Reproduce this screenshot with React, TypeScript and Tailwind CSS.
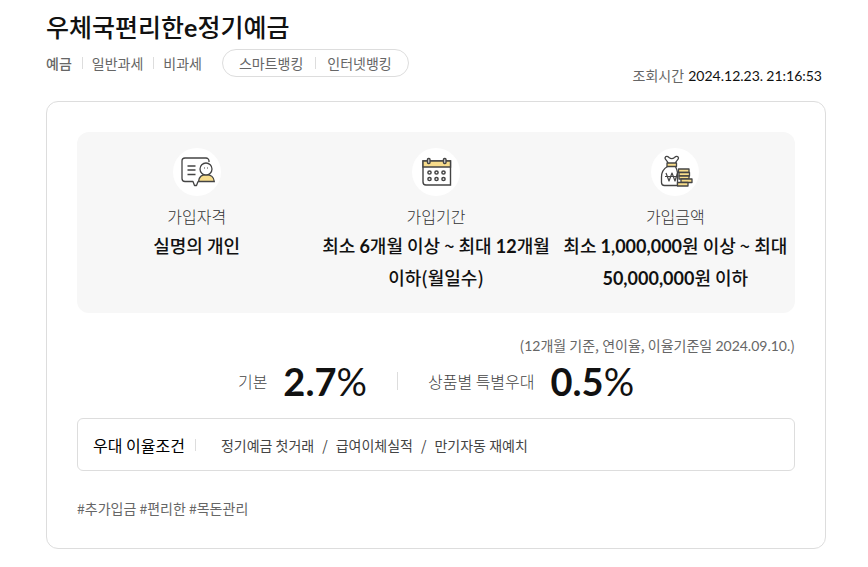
import type { ReactNode } from "react";

type SummaryItemType = {
  label: string;
  value: string;
  icon: ReactNode;
};

const PersonIcon = () => (
  <svg width="36" height="32" viewBox="0 0 36 32" fill="none" stroke="#444" strokeWidth="1.3" aria-hidden="true">
    <path d="M30 6V5A3 3 0 0 0 27 2H6A3 3 0 0 0 3 5V22.500A3 3 0 0 0 6 25.500H14L15.500 29.500H17.500L19 25.500" strokeLinejoin="round" />
    <path d="M8.500 10H16.500M8.500 14H16.500M8.500 18.500H16.500" />
    <path d="M19.500 25.500C20 21.500 22 18.500 27 18.500S35 21.500 35.300 25.500Z" fill="#f7dc8b" />
    <circle cx="27" cy="13" r="6" fill="#fff" />
    <path d="M25.500 11.500V12.500M28.500 11.500V12.500" strokeWidth="1" />
  </svg>
);

const CalendarIcon = () => (
  <svg width="32" height="32" viewBox="0 0 32 32" fill="none" stroke="#444" strokeWidth="1.4" aria-hidden="true">
    <path d="M3 5H30.500V29H6A3 3 0 0 1 3 26Z" fill="#fff" />
    <path d="M3 5H30.500V11H3Z" fill="#f7dc8b" />
    <rect x="7.500" y="2.500" width="2.500" height="5" rx="1" fill="#ddd" />
    <rect x="23.500" y="2.500" width="2.500" height="5" rx="1" fill="#ddd" />
    <g strokeWidth="1.5">
      <circle cx="9.500" cy="16.500" r="1.600" />
      <circle cx="16.500" cy="16.500" r="1.600" />
      <circle cx="23.500" cy="16.500" r="1.600" />
      <circle cx="9.500" cy="23" r="1.600" />
      <circle cx="16.500" cy="23" r="1.600" />
      <circle cx="23.500" cy="23" r="1.600" />
    </g>
  </svg>
);

const MoneyIcon = () => (
  <svg width="36" height="34" viewBox="0 0 36 34" fill="none" stroke="#444" strokeWidth="1.3" strokeLinejoin="round" aria-hidden="true">
    <path d="M11 8.500C11 6 8 5 8 3C8.500 1 10.500 1 12 2.500C13.500 3.700 16 3.700 17.500 2.500C19 1 21 1 21.500 3C21.500 5 18.500 6 18.500 8.500" />
    <path d="M10.500 11.500C7 13.500 4.500 17.500 4.500 22V27.500A3 3 0 0 0 7.500 30.500H20.500V17.500C20 15 19.500 13.500 18.500 11.500" />
    <path d="M10 8H19.500V11.500H10Z" fill="#f7dc8b" />
    <path d="M9 18L12 26L15 18L18 26L20.500 18M8 21.500H21" strokeWidth="1.200" />
    <g fill="#f7dc8b">
      <path d="M21.500 14H32V17.500H21.500Z" />
      <path d="M22 17.500H32.500V21H22Z" />
      <path d="M22 21H32V24H22Z" />
      <path d="M24 24H35V27.500H24Z" />
      <path d="M20.500 27.500H31V31H20.500Z" />
    </g>
  </svg>
);

const summary: SummaryItemType[] = [
  { label: "가입자격", value: "실명의 개인", icon: <PersonIcon /> },
  {
    label: "가입기간",
    value: "최소 6개월 이상 ~ 최대 12개월 이하(월일수)",
    icon: <CalendarIcon />,
  },
  {
    label: "가입금액",
    value: "최소 1,000,000원 이상 ~ 최대 50,000,000원 이하",
    icon: <MoneyIcon />,
  },
];

const conditions = ["정기예금 첫거래", "급여이체실적", "만기자동 재예치"];

const Divider = ({ className }: { className: string }) => (
  <span className={`w-px bg-[#ddd] ${className}`} />
);

// numbers use Lato, everything else the Korean font
const Numbers = ({ text, className = "" }: { text: string; className?: string }) => (
  <>
    {text.split(/(\d[\d,.:]*|\s)/).map((part, i) =>
      /^\d/.test(part) ? (
        <span key={i} className={`font-[Lato,sans-serif] leading-none ${className}`}>
          {part}
        </span>
      ) : (
        part
      )
    )}
  </>
);

export default function App() {
  return (
    <main className="bg-white pl-[46px] pr-[42px] pt-[6px] pb-[18px] font-['Noto_Sans_CJK_KR',sans-serif] text-sm text-[#666] break-keep">
      {/* Header */}
      <header className="flex items-end justify-between">
        <div className="pb-3">
          <h1 className="text-[25px] leading-10 font-medium text-[#111]">
            우체국편리한
            <span className="font-[Lato,sans-serif] leading-none font-bold">e</span>
            정기예금
          </h1>
          <div className="mt-[3px] flex items-center">
            <span className="font-medium">예금</span>
            <Divider className="h-3 ml-[10px] mr-[9px]" />
            <span>일반과세</span>
            <Divider className="h-3 ml-[10px] mr-[9px]" />
            <span>비과세</span>
            <div className="ml-5 flex h-7 items-center rounded-full border border-[#ddd] px-4">
              <span>스마트뱅킹</span>
              <Divider className="h-3 ml-3 mr-[11px]" />
              <span>인터넷뱅킹</span>
            </div>
          </div>
        </div>
        <p className="pr-1 pb-[2px] leading-6">
          조회시간{" "}
          <span className="ml-px text-[#111]">
            <Numbers text="2024.12.23. 21:16:53" />
          </span>
        </p>
      </header>

      <section className="mt-3 rounded-xl border border-[#ddd] px-[30px] pt-[30px] pb-7">
        {/* Summary */}
        <ul className="grid grid-cols-3 rounded-xl bg-[#f7f7f7] pt-4 pb-5">
          {summary.map((item) => (
            <li key={item.label} className="flex flex-col items-center text-center">
              <span className="flex h-12 w-12 items-center justify-center rounded-full bg-white">
                {item.icon}
              </span>
              <span className="mt-2 text-base leading-6 font-light text-[#333]">
                {item.label}
              </span>
              <strong className="mt-px px-1 text-lg leading-8 font-medium text-[#111]">
                <Numbers text={item.value} className="font-bold" />
              </strong>
            </li>
          ))}
        </ul>

        {/* Rates */}
        <p className="mt-5 text-right leading-6">
          <Numbers text="(12개월 기준, 연이율, 이율기준일 2024.09.10.)" />
        </p>
        <div className="flex h-12 items-center justify-center text-base">
          <span className="font-light text-[#444]">기본</span>
          <strong className="ml-4 font-[Lato,sans-serif] text-[38px] leading-none font-bold text-[#111]">
            2.7<span className="font-normal">%</span>
          </strong>
          <Divider className="h-[18px] mx-[30px]" />
          <span className="font-light text-[#444]">상품별 특별우대</span>
          <strong className="ml-4 font-[Lato,sans-serif] text-[38px] leading-none font-bold text-[#111]">
            0.5<span className="font-normal">%</span>
          </strong>
        </div>

        {/* Conditions */}
        <div className="mt-[13px] flex h-[53px] items-center rounded-md border border-[#ddd] px-[15px]">
          <span className="text-base text-black">우대 이율조건</span>
          <Divider className="h-3 ml-[10px] mr-[25px]" />
          <ul className="flex text-[#444]">
            {conditions.map((item, i) => (
              <li key={item}>
                {i > 0 && <span className="mx-2">/</span>}
                {item}
              </li>
            ))}
          </ul>
        </div>

        <p className="mt-[25px] leading-6">#추가입금 #편리한 #목돈관리</p>
      </section>
    </main>
  );
}
